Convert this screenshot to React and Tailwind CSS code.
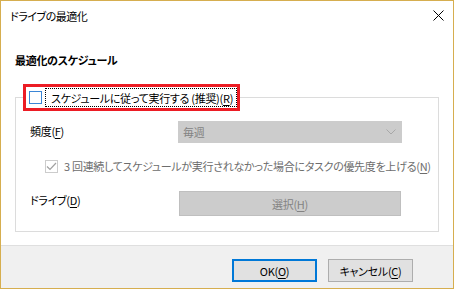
export default function App() {
  const U = ({ children }) => <span className="underline underline-offset-[2px]">{children}</span>;
  return (
    <div className="w-[454px] h-[289px] border border-[#d6ae4f] bg-white flex flex-col font-['Noto_Sans_CJK_JP',sans-serif] text-[11px] leading-[16px] tracking-[-0.3px] text-black [font-feature-settings:'palt'] overflow-hidden">
      <div className="h-[29px] shrink-0 flex items-center justify-between pl-[9px] pr-[9px]">
        <span className="tracking-[-0.5px]">ドライブの最適化</span>
        <svg width="11" height="11" viewBox="0 0 11 11">
          <path d="M0.5 0.5L10.5 10.5M10.5 0.5L0.5 10.5" stroke="#000" strokeWidth="1" />
        </svg>
      </div>
      <div className="flex-1 px-[14px] pt-[22px]">
        <div className="font-bold">最適化のスケジュール</div>
        <fieldset className="mt-[16px] border border-[#dcdcdc] px-0 pb-[15px]">
          <legend className="ml-[7px] p-0">
            <div className="w-[217px] h-[27px] border-[3px] border-[#ec1c24] flex items-center pl-[3px] gap-[3px]">
              <div className="w-[13px] h-[13px] border border-[#3b86d6] bg-white shrink-0" />
              <div className="w-[192px] h-[19px] border border-dotted border-black flex items-center pl-[5px] whitespace-nowrap">
                スケジュールに従って実行する (推奨)(<U>R</U>)
              </div>
            </div>
          </legend>
          <div className="mt-[10px] flex items-start pl-[14px]">
            <div className="w-[148px] pt-[2px]">頻度(<U>F</U>)</div>
            <div className="w-[224px] h-[22px] bg-[#cccccc] flex items-center justify-between pl-[5px] pr-[6px] text-[#838383]">
              <span>毎週</span>
              <svg width="10" height="6" viewBox="0 0 10 6">
                <path d="M0.5 0.5L5 5L9.5 0.5" stroke="#a8a8a8" fill="none" strokeWidth="1" />
              </svg>
            </div>
          </div>
          <div className="mt-[15px] flex items-center pl-[29px] gap-[6px] text-[#6d6d6d]">
            <div className="w-[13px] h-[13px] border border-[#cccccc] flex items-center justify-center shrink-0">
              <svg width="11" height="9" viewBox="0 0 11 9">
                <path d="M1 4.5L4 7.5L10 1" stroke="#a0a0a0" fill="none" strokeWidth="1.2" />
              </svg>
            </div>
            <span className="whitespace-nowrap">3 回連続してスケジュールが実行されなかった場合にタスクの優先度を上げる(<U>N</U>)</span>
          </div>
          <div className="mt-[17px] flex items-start pl-[14px]">
            <div className="w-[149px] pt-[1px]">ドライブ(<U>D</U>)</div>
            <div className="w-[222px] h-[25px] bg-[#cccccc] border border-[#bfbfbf] flex items-center justify-center text-[#838383]">
              <span>選択(<U>H</U>)</span>
            </div>
          </div>
        </fieldset>
      </div>
      <div className="h-[43px] shrink-0 bg-[#f0f0f0] border-t border-[#dfdfdf] flex justify-end items-start gap-[11px] pt-[13px] pr-[40px]">
        <div className="w-[85px] h-[23px] bg-[#e1e1e1] border-2 border-[#0078d7] flex items-center justify-center">
          OK(<U>O</U>)
        </div>
        <div className="w-[85px] h-[23px] bg-[#e1e1e1] border border-[#adadad] flex items-center justify-center">
          キャンセル(<U>C</U>)
        </div>
      </div>
    </div>
  );
}
